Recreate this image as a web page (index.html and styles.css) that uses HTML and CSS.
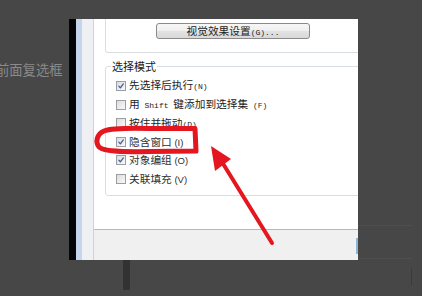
FILE: index.html
```html
<!DOCTYPE html>
<html lang="zh-CN">
<head>
<meta charset="utf-8">
<title>选择模式</title>
<link rel="stylesheet" href="styles.css">
</head>
<body>
<div class="page">
  <div class="side-left">
    <p class="ghost">前面复选框</p>
  </div>
  <div class="shot-col">
    <div class="shot">
      <div class="edge-black"></div>
      <div class="edge-blue"></div>
      <div class="edge-gray"></div>
      <div class="dialog">
        <div class="dialog-body">
          <div class="top-panel">
            <div class="btn">视觉效果设置<span class="lat">(G)...</span></div>
          </div>
          <div class="group">
            <div class="group-title">选择模式</div>
            <ul class="opts">
              <li class="opt"><span class="cb on"><svg viewBox="0 0 10 10"><path d="M2.3 5.2 L4.2 7.3 L7.9 2.4"/></svg></span><span class="lbl">先选择后执行<span class="lat">(N)</span></span></li>
              <li class="opt"><span class="cb"></span><span class="lbl">用<span class="lat"> Shift </span>键添加到选择集<span class="lat"> (F)</span></span></li>
              <li class="opt"><span class="cb"></span><span class="lbl">按住并拖动<span class="lat">(D)</span></span></li>
              <li class="opt"><span class="cb on"><svg viewBox="0 0 10 10"><path d="M2.3 5.2 L4.2 7.3 L7.9 2.4"/></svg></span><span class="lbl soft">隐含窗口<span class="sans"> (I)</span></span></li>
              <li class="opt"><span class="cb on"><svg viewBox="0 0 10 10"><path d="M2.3 5.2 L4.2 7.3 L7.9 2.4"/></svg></span><span class="lbl soft">对象编组<span class="sans"> (O)</span></span></li>
              <li class="opt"><span class="cb"></span><span class="lbl soft">关联填充<span class="sans"> (V)</span></span></li>
            </ul>
          </div>
        </div>
        <div class="dialog-foot"><span class="blue-edge"></span></div>
      </div>
    </div>
    <div class="under-strip"></div>
  </div>
  <div class="side-right">
    <div class="faint f1"></div>
    <div class="faint f2"></div>
    <div class="dark-tick"></div>
  </div>
</div>
<svg class="annot" viewBox="0 0 422 296" aria-hidden="true">
  <path class="ring" d="M104 131 C112 128 130 128 150 128.5 L195 128.5 L196 151 L150 151.5 C125 152 104 152 99 147 C95 142 97 134 104 131 Z"/>
  <line class="shaft" x1="272" y1="243" x2="222" y2="162"/>
  <polygon class="head" points="211,146 231,159 215,171"/>
</svg>
</body>
</html>
```

FILE: styles.css
```css
* { box-sizing: border-box; }

html, body {
  margin: 0;
  padding: 0;
}

body {
  width: 422px;
  height: 296px;
  overflow: hidden;
  background: #474747;
  position: relative;
  font-family: "Noto Sans CJK SC", "Noto Sans", sans-serif;
}

.page {
  display: flex;
  height: 296px;
}

.side-left {
  width: 69px;
  flex: none;
  overflow: hidden;
}

.ghost {
  margin: 62px 0 0 -4px;
  font-size: 13.3px;
  line-height: 16px;
  color: #8a8a8a;
  white-space: nowrap;
}

.shot-col {
  width: 289px;
  flex: none;
}

.shot {
  margin-top: 19px;
  height: 241px;
  display: flex;
}

.edge-black { width: 7px; background: #050505; }
.edge-blue { width: 6px; background: #c4d5ec; }
.edge-gray { width: 11px; background: #eef0f3; }

.dialog {
  flex: 1;
  display: flex;
  flex-direction: column;
  overflow: hidden;
  border-left: 1px solid #cfd2d6;
}

.dialog-body {
  height: 211px;
  background: #fff;
  border-bottom: 1px solid #b9b9b9;
}

.top-panel {
  height: 34px;
  margin: 0 -8px 0 11px;
  border: 1px solid #d9dee3;
  border-top: none;
  border-radius: 0 0 3px 3px;
  padding-top: 4px;
}

.btn {
  margin-left: 50px;
  width: 154px;
  height: 16px;
  border: 1px solid #8a8a8a;
  border-radius: 3px;
  background: linear-gradient(#f7f7f7 0%, #efefef 48%, #e2e2e2 52%, #d9d9d9 100%);
  font-size: 10.7px;
  line-height: 14px;
  color: #222;
  text-align: center;
  white-space: nowrap;
}

.lat {
  font-family: "Liberation Mono", monospace;
  font-size: 8px;
}

.sans {
  font-family: "Liberation Sans", sans-serif;
  font-size: 9.5px;
}

.group {
  margin: 13px -8px 0 11px;
  height: 130px;
  border: 1px solid #d9dee3;
  border-radius: 3px;
}

.group-title {
  margin: -7px 0 0 5px;
  padding: 0 1px;
  width: fit-content;
  background: #fff;
  font-size: 11px;
  line-height: 13px;
  color: #1a1a1a;
}

.opts {
  list-style: none;
  margin: 3.7px 0 0 10px;
  padding: 0;
}

.opt {
  height: 18.6px;
  display: flex;
  align-items: center;
  gap: 3px;
}

.cb {
  width: 10px;
  height: 10px;
  flex: none;
  border: 1px solid #9a9ea3;
  background: linear-gradient(135deg, #dcdcdc 0%, #eeeeee 60%, #f8f8f8 100%);
  display: flex;
}

.cb svg {
  width: 8px;
  height: 8px;
}

.cb path {
  fill: none;
  stroke: #3f5b96;
  stroke-width: 1.6;
  stroke-linecap: round;
  stroke-linejoin: round;
}

.lbl {
  font-size: 10.7px;
  line-height: 13px;
  color: #1c1c1c;
  white-space: nowrap;
}

.lbl.soft {
  color: #2e2e2e;
}

.dialog-foot {
  flex: 1;
  background: #f0f0f0;
  display: flex;
  justify-content: flex-end;
  align-items: flex-start;
}

.blue-edge {
  margin-top: 8px;
  width: 2px;
  height: 16px;
  background: #8db6d6;
}

.under-strip {
  margin-left: 54px;
  width: 7px;
  height: 30px;
  background: #323232;
}

.side-right {
  flex: 1;
  display: flex;
  flex-direction: column;
}

.faint {
  width: 54px;
  height: 1px;
  background: #4f4f4f;
}

.f1 { margin-top: 225px; }
.f2 { margin-top: 32px; }

.dark-tick {
  margin: 9px 0 0 53px;
  width: 1px;
  height: 17px;
  background: #3b3b3b;
}

.annot {
  position: absolute;
  left: 0;
  top: 0;
  width: 422px;
  height: 296px;
  pointer-events: none;
}

.ring {
  fill: none;
  stroke: #e4161f;
  stroke-width: 5;
  stroke-linejoin: round;
}

.shaft {
  stroke: #e4161f;
  stroke-width: 4;
  stroke-linecap: round;
}

.head {
  fill: #e4161f;
}
```
